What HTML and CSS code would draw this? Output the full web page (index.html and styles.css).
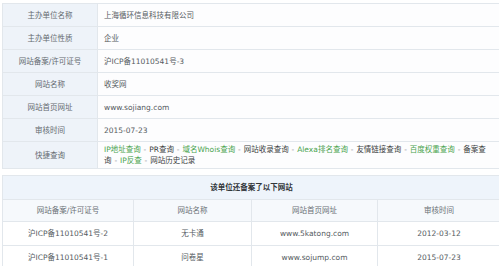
FILE: index.html
```html
<!DOCTYPE html>
<html lang="zh-CN">
<head>
<meta charset="utf-8">
<title>备案信息</title>
<link rel="stylesheet" href="styles.css">
</head>
<body>
<div class="page">
  <table class="info">
    <colgroup><col class="c-label"><col></colgroup>
    <tr><th>主办单位名称</th><td>上海循环信息科技有限公司</td></tr>
    <tr><th>主办单位性质</th><td>企业</td></tr>
    <tr><th>网站备案/许可证号</th><td>沪ICP备11010541号-3</td></tr>
    <tr><th>网站名称</th><td>收奖网</td></tr>
    <tr><th>网站首页网址</th><td>www.sojiang.com</td></tr>
    <tr><th>审核时间</th><td>2015-07-23</td></tr>
    <tr class="quick"><th>快捷查询</th><td><span class="line"><a class="g">IP地址查询</a><span class="sep"> - </span><a>PR查询</a><span class="sep"> - </span><a class="g">域名Whois查询</a><span class="sep"> - </span><a>网站收录查询</a><span class="sep"> - </span><a class="g">Alexa排名查询</a><span class="sep"> - </span><a>友情链接查询</a><span class="sep"> - </span><a class="g">百度权重查询</a><span class="sep"> - </span><a>备案查</a></span><br><span class="line"><a>询</a><span class="sep"> - </span><a class="g">IP反查</a><span class="sep"> - </span><a>网站历史记录</a></span></td></tr>
  </table>

  <table class="list">
    <colgroup><col class="c1"><col class="c2"><col class="c3"><col class="c4"></colgroup>
    <tr class="title"><th colspan="4">该单位还备案了以下网站</th></tr>
    <tr class="head"><td>网站备案/许可证号</td><td>网站名称</td><td>网站首页网址</td><td>审核时间</td></tr>
    <tr><td>沪ICP备11010541号-2</td><td>无卡通</td><td>www.5katong.com</td><td>2012-03-12</td></tr>
    <tr><td>沪ICP备11010541号-1</td><td>问卷星</td><td>www.sojump.com</td><td>2015-07-23</td></tr>
  </table>
</div>
</body>
</html>
```

FILE: styles.css
```css
html, body {
  margin: 0;
  padding: 0;
  background: #ffffff;
  overflow: hidden;
}
body {
  font-family: "DejaVu Sans", "Noto Sans CJK SC", sans-serif;
  font-size: 7.5px;
  color: #555b61;
}
.page {
  width: 499px;
  height: 266px;
  overflow: hidden;
  padding: 3px 0 0 2px;
  box-sizing: border-box;
}
table {
  border-collapse: collapse;
  table-layout: fixed;
  width: 498px;
}
td, th {
  border: 1px solid #e2e7ec;
  padding: 0;
  line-height: 11px;
}
.info th {
  width: 95px;
  background: #eef3f9;
  color: #646a70;
  font-weight: normal;
  text-align: center;
  height: 22px;
}
.c-label { width: 95px; }
.info td {
  padding: 0 6px;
  height: 22px;
  background: #fdfdfe;
}
.info .quick th,
.info .quick td { height: 24px; }
.info .quick td { padding: 1px 6px; }
.line { white-space: nowrap; }
a { color: #3c3f42; text-decoration: none; }
a.g { color: #4aa44f; }
.sep { color: #8a8f94; padding: 0 0.5px; }

.list { margin-top: 6px; }
.c1 { width: 131px; }
.c2 { width: 118px; }
.c3 { width: 126px; }
.c4 { width: 123px; }
.list td { text-align: center; height: 23px; }
.list .title th {
  background: #eef4fb;
  color: #33373b;
  font-weight: bold;
  text-align: center;
  height: 23px;
}
.list .head td {
  background: #f6f9fc;
  color: #6a7075;
  height: 21px;
}
```
